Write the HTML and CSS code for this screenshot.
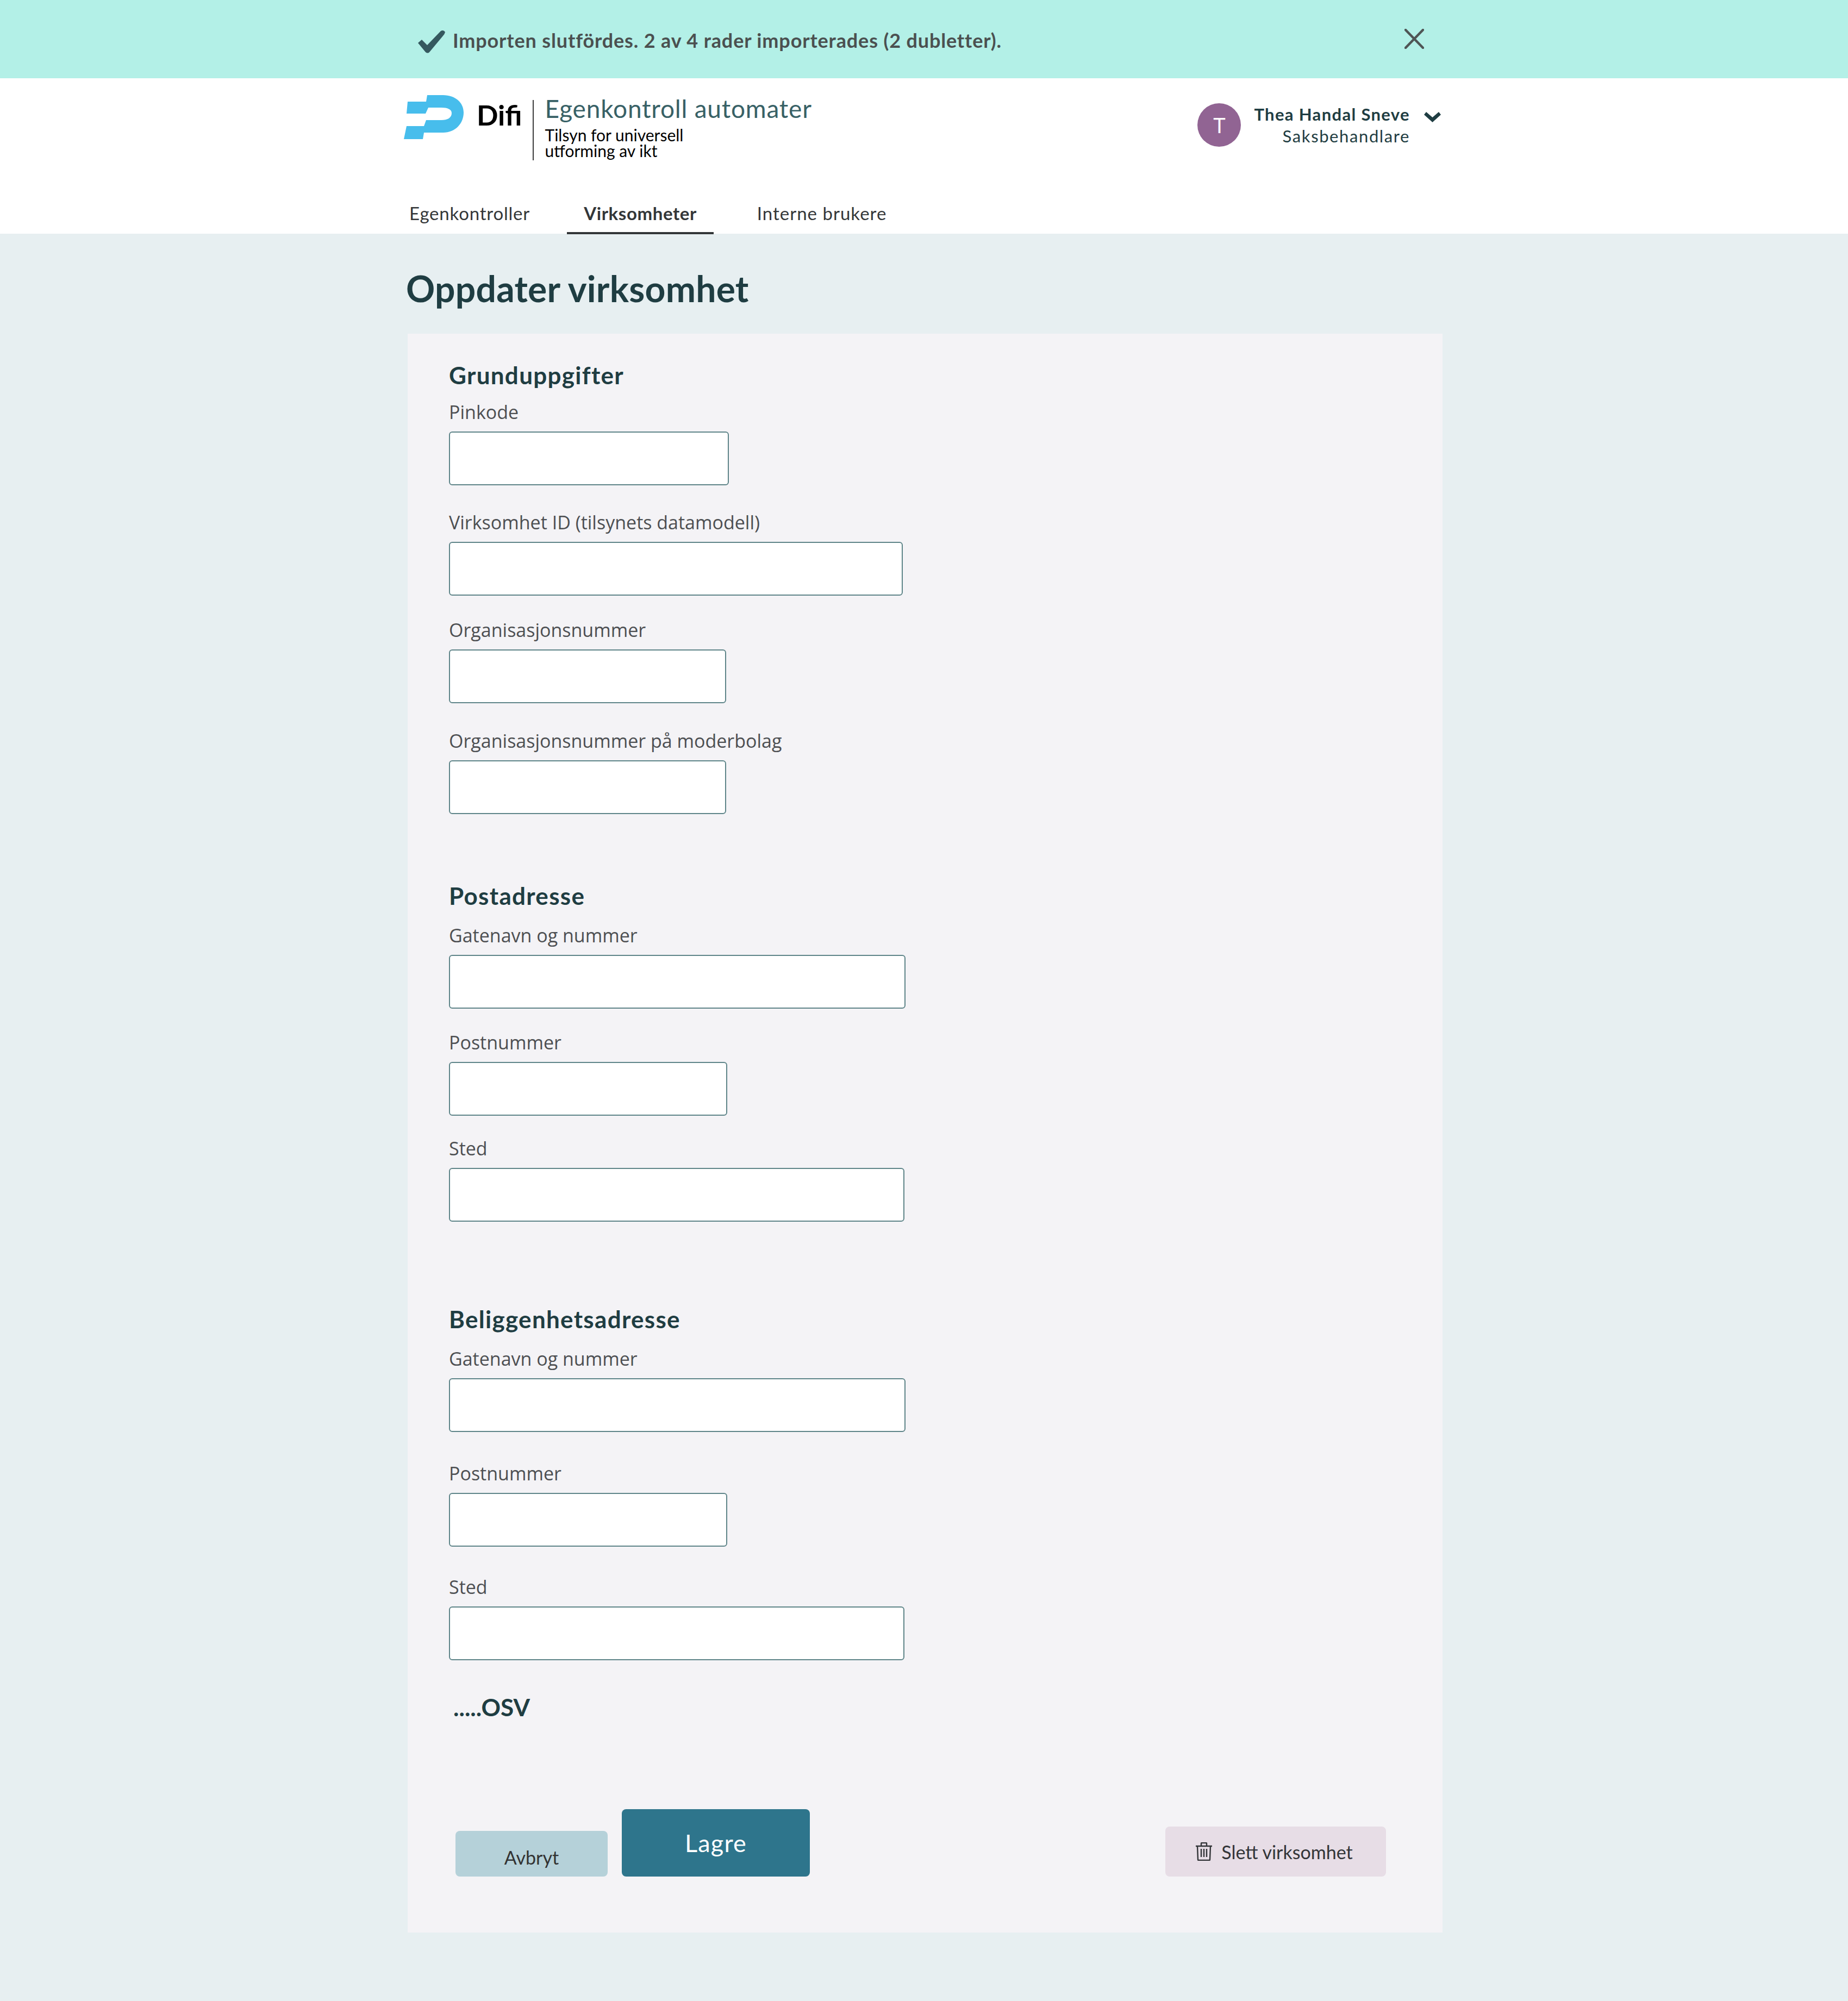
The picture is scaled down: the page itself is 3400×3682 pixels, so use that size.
FILE: index.html
```html
<!DOCTYPE html>
<html>

<head>
  <title>Oppdater virksomhet</title>
  <link rel="stylesheet" href="styles.css">
</head>

<body>
  <div class="banner">
    <div class="bannerInner">
      <svg class="bannerCheck" width="51" height="43" viewBox="0 0 51 43">
        <path d="M1 24 L8 18 L18 28 L43 2 Q48 -1 51 4 Q50 8 47 11 L22 41 Q19 44 15 41 Z" fill="#35595f"/>
      </svg>
      <span class="bannerText">Importen slutfördes. 2 av 4 rader importerades (2 dubletter).</span>
      <svg class="bannerClose" width="36" height="37" viewBox="0 0 36 37">
        <path d="M2 2 L34 35 M34 2 L2 35" stroke="#4f5555" stroke-width="4.5" stroke-linecap="round" fill="none"/>
      </svg>
    </div>
  </div>

  <header class="header">
    <div class="headerTop">
      <div class="brand">
        <svg class="logoMark" width="110" height="81" viewBox="0 0 110 81">
          <path d="M43 0 H72 C95 0 110 14 110 32 C110 52 95 69 72 69 H37 L35 81 H0 L5 57 H37 L41 46 H69 C80 46 88 42 88 33 C88 26 80 23 69 23 H45 L40 34 H5 L7 12 H41 Z" fill="#47bdec"/>
        </svg>
        <span class="logoWord">Difi</span>
        <div class="brandDivider"></div>
        <div class="brandText">
          <div class="brandTitle">Egenkontroll automater</div>
          <div class="brandSub">Tilsyn for universell<br>utforming av ikt</div>
        </div>
      </div>
      <div class="user">
        <div class="avatar">T</div>
        <div class="userText">
          <div class="userName">Thea Handal Sneve</div>
          <div class="userRole">Saksbehandlare</div>
        </div>
        <svg class="userChevron" width="31" height="19" viewBox="0 0 31 19">
          <path d="M0 5 L4 0 L15.500 10 L27 0 L31 5 L15.500 19 Z" fill="#1f3d42"/>
        </svg>
      </div>
    </div>
    <nav class="tabs">
      <a class="tab tabFirst">Egenkontroller</a>
      <a class="tab tabActive">Virksomheter</a>
      <a class="tab tabLast">Interne brukere</a>
    </nav>
  </header>

  <main class="main">
    <h1 class="pageTitle">Oppdater virksomhet</h1>

    <form class="panel">
      <h2 class="sectionTitle">Grunduppgifter</h2>
      <div class="field">
        <label class="fieldLabel">Pinkode</label>
        <input class="fieldInput w515" type="text">
      </div>
      <div class="field gap46">
        <label class="fieldLabel">Virksomhet ID (tilsynets datamodell)</label>
        <input class="fieldInput w835" type="text">
      </div>
      <div class="field gap41">
        <label class="fieldLabel">Organisasjonsnummer</label>
        <input class="fieldInput w510" type="text">
      </div>
      <div class="field gap47">
        <label class="fieldLabel">Organisasjonsnummer på moderbolag</label>
        <input class="fieldInput w510" type="text">
      </div>

      <h2 class="sectionTitle sectionGap">Postadresse</h2>
      <div class="field gapLabel">
        <label class="fieldLabel">Gatenavn og nummer</label>
        <input class="fieldInput w840" type="text">
      </div>
      <div class="field gap40">
        <label class="fieldLabel">Postnummer</label>
        <input class="fieldInput w512" type="text">
      </div>
      <div class="field gap38">
        <label class="fieldLabel">Sted</label>
        <input class="fieldInput w838" type="text">
      </div>

      <h2 class="sectionTitle sectionGapLarge">Beliggenhetsadresse</h2>
      <div class="field gapLabel">
        <label class="fieldLabel">Gatenavn og nummer</label>
        <input class="fieldInput w840" type="text">
      </div>
      <div class="field gap54">
        <label class="fieldLabel">Postnummer</label>
        <input class="fieldInput w512" type="text">
      </div>
      <div class="field gap52">
        <label class="fieldLabel">Sted</label>
        <input class="fieldInput w838" type="text">
      </div>

      <div class="etc">.....OSV</div>

      <div class="actions">
        <button class="btn btnCancel" type="button">Avbryt</button>
        <button class="btn btnSave" type="button">Lagre</button>
        <button class="btn btnDelete" type="button">
          <svg width="32" height="34" viewBox="0 0 32 34">
            <path d="M1 7 H31 M11 7 V2 Q11 1 12 1 H20 Q21 1 21 2 V7 M4 7 L5 32 Q5 33 6 33 H26 Q27 33 27 32 L28 7 M11 12 V27 M16 12 V27 M21 12 V27" fill="none" stroke="#333538" stroke-width="2.400"/>
          </svg>
          Slett virksomhet
        </button>
      </div>
    </form>
  </main>
</body>

</html>
```

FILE: styles.css
```css
body {
  margin: 0;
  background: #e7eff1;
  font-family: "Lato", "Liberation Sans", sans-serif;
}

.banner {
  height: 144px;
  background: #b3f0e7;
}

.bannerInner {
  width: 1852px;
  margin-left: 768px;
  height: 144px;
  display: flex;
  align-items: center;
}

.bannerCheck {
  margin-right: 14px;
  margin-top: 8px;
}

.bannerText {
  font-size: 36px;
  font-weight: 700;
  letter-spacing: 0.85px;
  color: #4b5050;
  margin-top: 4px;
}

.bannerClose {
  margin-left: auto;
  margin-bottom: 2px;
}

.header {
  height: 286px;
  background: #ffffff;
  display: flex;
  flex-direction: column;
}

.headerTop {
  width: 1908px;
  margin-left: 743px;
  display: flex;
  justify-content: space-between;
  align-items: flex-start;
}

.brand {
  display: flex;
  align-items: flex-start;
  margin-top: 31px;
}

.logoWord {
  font-size: 52px;
  font-weight: 700;
  line-height: 54px;
  color: #000000;
  margin-left: 24px;
  margin-top: 9px;
}

.brandDivider {
  width: 2px;
  height: 111px;
  background: #3c3c3c;
  margin-left: 19px;
  margin-top: 9px;
}

.brandText {
  margin-left: 21px;
}

.brandTitle {
  font-size: 46px;
  line-height: 50px;
  letter-spacing: 0.8px;
  color: #386166;
}

.brandSub {
  font-size: 30px;
  line-height: 29px;
  color: #000000;
  margin-top: 9px;
}

.user {
  display: flex;
  align-items: flex-start;
  margin-top: 46px;
}

.avatar {
  width: 80px;
  height: 80px;
  border-radius: 50%;
  background: #916493;
  color: #ffffff;
  font-size: 38px;
  line-height: 80px;
  text-align: center;
}

.userText {
  margin-left: 24px;
  text-align: right;
  color: #1f3d42;
}

.userName {
  font-size: 31px;
  font-weight: 700;
  line-height: 40px;
  letter-spacing: 1.35px;
}

.userRole {
  font-size: 31px;
  line-height: 40px;
  letter-spacing: 1.6px;
}

.userChevron {
  margin-left: 26px;
  margin-top: 16px;
}

.tabs {
  margin-top: auto;
  margin-left: 722px;
  margin-bottom: -1px;
  display: flex;
  gap: 37px;
}

.tab {
  padding: 0 31px 12px;
  font-size: 33px;
  line-height: 46px;
  color: #333638;
  border-bottom: 4px solid transparent;
  letter-spacing: 0.8px;
}

.tabActive {
  font-weight: 700;
  letter-spacing: 0.6px;
  border-bottom-color: #333638;
}

.tabLast {
  margin-left: 12px;
  letter-spacing: 1px;
}

.main {
  padding: 0 0 126px 747px;
}

.pageTitle {
  margin: 0;
  padding-top: 60px;
  font-size: 66px;
  line-height: 82px;
  font-weight: 700;
  letter-spacing: 0.25px;
  color: #1f3d42;
}

.panel {
  width: 1904px;
  height: 2942px;
  box-sizing: border-box;
  margin-left: 3px;
  margin-top: 42px;
  padding: 50px 76px 0;
  background: #f4f3f6;
  display: flex;
  flex-direction: column;
}

.sectionTitle {
  margin: 0;
  font-size: 44px;
  line-height: 52px;
  font-weight: 700;
  letter-spacing: 1.3px;
  color: #1f3d42;
}

.sectionGap {
  margin-top: 124px;
}

.sectionGapLarge {
  margin-top: 153px;
}

.field {
  display: flex;
  flex-direction: column;
  align-items: flex-start;
  margin-top: 20px;
}

.gapLabel {
  margin-top: 25px;
}

.gap38 { margin-top: 38px; }
.gap40 { margin-top: 40px; }
.gap41 { margin-top: 41px; }
.gap46 { margin-top: 46px; }
.gap47 { margin-top: 47px; }
.gap52 { margin-top: 52px; }
.gap54 { margin-top: 54px; }

.fieldLabel {
  font-family: "Open Sans", "Liberation Sans", sans-serif;
  font-size: 34px;
  line-height: 44px;
  color: #4d4f52;
  margin-bottom: 14px;
}

.fieldInput {
  height: 99px;
  box-sizing: border-box;
  background: #ffffff;
  border: 2px solid #5f8589;
  border-radius: 6px;
}

.w510 { width: 510px; }
.w512 { width: 512px; }
.w515 { width: 515px; }
.w835 { width: 835px; }
.w838 { width: 838px; }
.w840 { width: 840px; }

.etc {
  margin-top: 60px;
  margin-left: 8px;
  font-size: 44px;
  line-height: 52px;
  font-weight: 700;
  color: #1f3d42;
}

.actions {
  margin-top: 162px;
  margin-left: 12px;
  display: flex;
  align-items: flex-end;
  width: 1712px;
}

.btn {
  border: 0;
  padding: 0;
  border-radius: 8px;
  font-family: "Lato", "Liberation Sans", sans-serif;
}

.btnCancel {
  width: 280px;
  height: 84px;
  padding-top: 12px;
  background: #b5d1d9;
  color: #333333;
  font-size: 34px;
}

.btnSave {
  width: 346px;
  height: 124px;
  margin-left: 26px;
  background: #2e758c;
  color: #ffffff;
  font-size: 45px;
  letter-spacing: 1.2px;
}

.btnDelete {
  width: 406px;
  height: 92px;
  margin-left: auto;
  padding-right: 6px;
  background: #e7dde6;
  color: #333538;
  font-size: 34px;
  display: flex;
  align-items: center;
  justify-content: center;
  gap: 16px;
}
```
